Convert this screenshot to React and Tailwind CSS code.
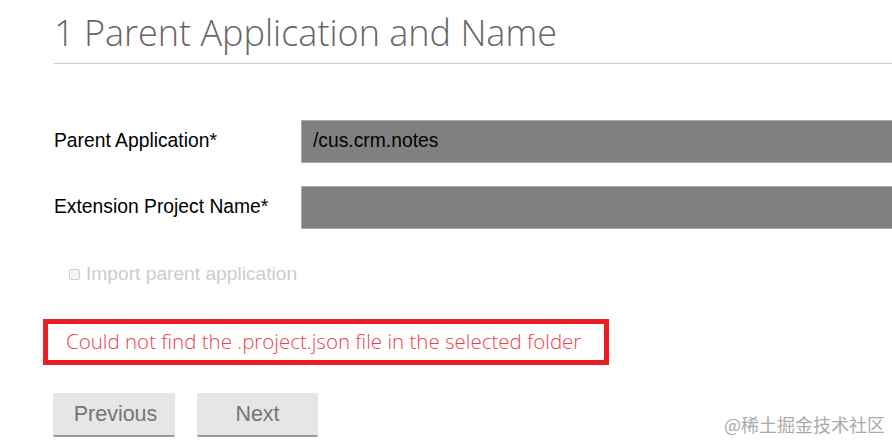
import React from 'react';

export default function App() {
  return (
    <div className="relative w-[892px] h-[443px] overflow-hidden bg-white" style={{ fontFamily: '"Liberation Sans", Arial, sans-serif' }}>
      <div className="pl-[54px]">
        {/* Step heading */}
        <h1
          className="pt-[10px] pb-[7px] text-[36px] leading-[46px] font-light text-[#666666] border-b border-[#cccccc]"
          style={{ fontFamily: '"Open Sans", sans-serif' }}
        >
          1 Parent Application and Name
        </h1>

        {/* Form fields */}
        <div className="mt-[56px] flex flex-col gap-[23px]">
          <div className="flex items-center">
            <label className="w-[247px] text-[19.3px] text-black">Parent Application*</label>
            <div className="flex-1 h-[43px] bg-[#808080] border border-[#a9a9a9] border-r-0 flex items-center pl-[11px] text-[19.3px] text-black">
              /cus.crm.notes
            </div>
          </div>
          <div className="flex items-center">
            <label className="w-[247px] text-[19.3px] text-black">Extension Project Name*</label>
            <div className="flex-1 h-[43px] bg-[#808080] border border-[#a9a9a9] border-r-0" />
          </div>
        </div>

        <div className="mt-[31px] ml-[15px] flex items-center gap-[6px] text-[19.2px] text-[#cccccc]">
          <span className="w-[11px] h-[11px] border border-[#d0d0d0] rounded-[2px] bg-[#f4f4f4]" />
          <span>Import parent application</span>
        </div>

        {/* Error message */}
        <div className="mt-[30px] -ml-[11px] w-[566px] h-[46px] border-[5px] border-[#ed1c24] flex items-center pl-[18px]">
          <span className="text-[20.5px] font-light text-[#e5454f]" style={{ fontFamily: '"Open Sans", sans-serif' }}>
            Could not find the .project.json file in the selected folder
          </span>
        </div>

        {/* Navigation */}
        <div className="mt-[28px] -ml-[1px] flex gap-[22px]">
          <button className="w-[122px] h-[44px] pl-[3px] rounded-[2px] bg-[#e6e6e6] border-b-2 border-[#9a9a9a] text-[21.5px] text-[#757575]">
            Previous
          </button>
          <button className="w-[121px] h-[44px] rounded-[2px] bg-[#e6e6e6] border-b-2 border-[#9a9a9a] text-[21.5px] text-[#757575]">
            Next
          </button>
        </div>
      </div>

      <div
        className="absolute right-[7px] bottom-[5px] text-[18px] text-[#aaaaaa]"
        style={{ fontFamily: '"Noto Sans CJK SC", sans-serif' }}
      >
        @稀土掘金技术社区
      </div>
    </div>
  );
}
